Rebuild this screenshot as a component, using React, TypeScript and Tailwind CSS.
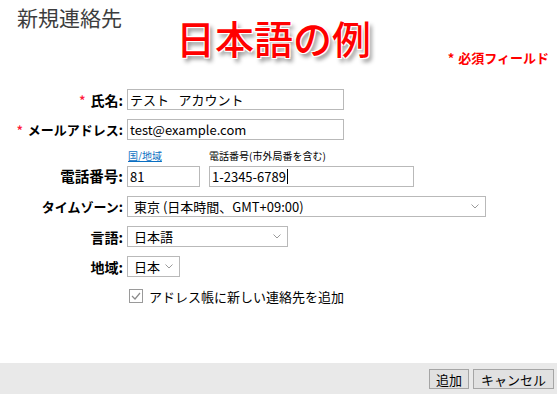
import React from "react";

const jp = { fontFamily: '"Noto Sans CJK JP", "Noto Sans", sans-serif' };

function Chevron() {
  return (
    <svg width="8" height="5" viewBox="0 0 8 5" className="shrink-0">
      <path d="M0.5 0.5 L4 4 L7.5 0.5" fill="none" stroke="#9a9a9a" strokeWidth="1" />
    </svg>
  );
}

function Label({ text, required, size }: { text: string; required?: boolean; size: string }) {
  return (
    <div className={`flex items-center justify-end ${size} font-bold text-black leading-none whitespace-nowrap`}>
      {required && <span className="text-[#ff1a3c] font-bold mr-[5px] text-[12px]">*</span>}
      <span>{text}:</span>
    </div>
  );
}

function TextBox({ value, w, caret }: { value: string; w: string; caret?: boolean }) {
  return (
    <div className={`${w} h-[21px] border border-[#b9b9b9] bg-white flex items-center px-[2px] text-[13px] leading-none text-black whitespace-pre overflow-hidden`}>
      {value}
      {caret && <span className="w-px h-[15px] bg-black ml-[1px]" />}
    </div>
  );
}

function SelectBox({ value, w }: { value: string; w: string }) {
  return (
    <div className={`${w} h-[21px] border border-[#b9b9b9] bg-white flex items-center justify-between pl-[6px] pr-[6px] text-[13px] leading-none text-black whitespace-nowrap`}>
      <span>{value}</span>
      <Chevron />
    </div>
  );
}

export default function App() {
  return (
    <div className="w-[557px] h-[394px] bg-white flex flex-col relative overflow-hidden" style={jp}>
      <div className="h-[89px] flex flex-col">
        <div className="pl-[17px] pt-[4px] text-[21px] leading-[26px] text-[#3d3d3d]">新規連絡先</div>
        <div className="flex justify-end pr-[8px] pt-[20px] text-[13px] font-bold text-[#ff0000] leading-[16px]">
          <span className="mr-[4px]">*</span>
          <span>必須フィールド</span>
        </div>
      </div>

      <div className="absolute left-[176px] top-[13px] text-[39px] leading-[48px] font-medium text-[#ff0000] [text-shadow:-1px_-1px_0_#fff,1px_-1px_0_#fff,-1px_1px_0_#fff,1px_1px_0_#fff,3px_4px_4px_rgba(0,0,0,0.45)]">
        日本語の例
      </div>

      <div className="grid grid-cols-[123px_auto] gap-x-[4px] gap-y-[9px] items-center">
        <Label text="氏名" required size="text-[14px]" />
        <TextBox value={"テスト\u2002 アカウント"} w="w-[217px]" />

        <Label text="メールアドレス" required size="text-[13px]" />
        <TextBox value="test@example.com" w="w-[217px]" />

        <div className="self-end h-[21px] flex items-center justify-end">
          <Label text="電話番号" size="text-[14.5px]" />
        </div>
        <div className="flex gap-[9px]">
          <div className="flex flex-col">
            <div className="h-[17px] pl-[1px] text-[10px] leading-[13px] text-[#0a6fc2] underline">国/地域</div>
            <TextBox value="81" w="w-[73px]" />
          </div>
          <div className="flex flex-col">
            <div className="h-[17px] text-[10px] leading-[13px] text-black">電話番号(市外局番を含む)</div>
            <TextBox value="1-2345-6789" w="w-[205px]" caret />
          </div>
        </div>

        <Label text="タイムゾーン" size="text-[13px]" />
        <SelectBox value="東京 (日本時間、GMT+09:00)" w="w-[359px]" />

        <Label text="言語" size="text-[14px]" />
        <SelectBox value="日本語" w="w-[161px]" />

        <Label text="地域" size="text-[14px]" />
        <SelectBox value="日本" w="w-[53px]" />

        <div />
        <div className="flex items-center h-[20px] pl-[2px] gap-[6px] text-[13px] leading-none text-black">
          <svg width="14" height="14" viewBox="0 0 14 14">
            <rect x="0.5" y="0.5" width="13" height="13" fill="#fff" stroke="#9a9a9a" />
            <path d="M3 7 L6 10 L11 4" fill="none" stroke="#8a8a8a" strokeWidth="1.2" />
          </svg>
          <span>アドレス帳に新しい連絡先を追加</span>
        </div>
      </div>

      <div className="flex-1" />

      <div className="h-[31px] bg-[#e9e9e9] flex items-center justify-end gap-[4px] pr-[3px] pt-[1px]">
        <button className="w-[40px] h-[20px] border border-[#a5a5a5] bg-[#e1e1e1] text-[13px] leading-none text-black flex items-center justify-center">
          追加
        </button>
        <button className="w-[81px] h-[20px] border border-[#a5a5a5] bg-[#e1e1e1] text-[13px] leading-none text-black flex items-center justify-center">
          キャンセル
        </button>
      </div>
    </div>
  );
}
